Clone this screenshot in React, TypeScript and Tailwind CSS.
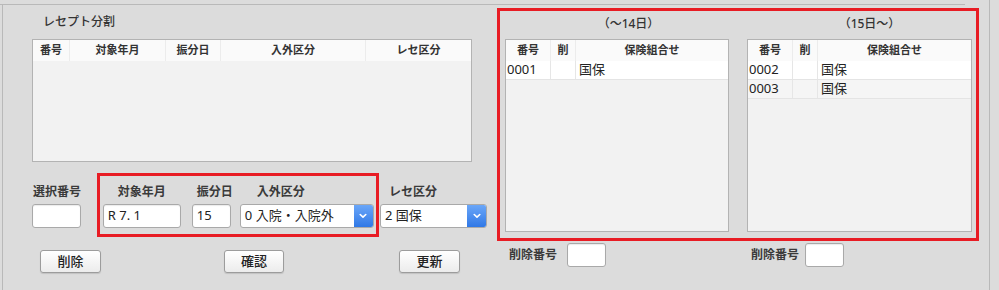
import React from "react";

const font = "font-['Noto_Sans','Noto_Sans_CJK_JP',sans-serif]";

function TextBox({ value = "", className = "" }: { value?: string; className?: string }) {
  return (
    <div
      className={`h-[24px] bg-white border border-[#a9a9a9] rounded-[3px] shadow-[inset_0_1px_1px_rgba(0,0,0,0.08)] flex items-center pl-[4px] text-[13px] text-[#222] ${className}`}
    >
      {value}
    </div>
  );
}

function Chevron() {
  return (
    <svg width="8" height="6" viewBox="0 0 8 6" fill="none">
      <path d="M1.2 1.5 L4 4.2 L6.8 1.5" stroke="white" strokeWidth="1.6" strokeLinecap="round" strokeLinejoin="round" />
    </svg>
  );
}

function SelectBox({ value, className = "" }: { value: string; className?: string }) {
  return (
    <div
      className={`h-[24px] bg-white border border-[#a9a9a9] rounded-[3px] flex items-stretch overflow-hidden text-[13px] text-[#222] ${className}`}
    >
      <div className="flex-1 flex items-center pl-[4px] whitespace-nowrap">{value}</div>
      <div className="w-[19px] flex items-center justify-center bg-gradient-to-b from-[#6aa6f8] to-[#2f78e6]">
        <Chevron />
      </div>
    </div>
  );
}

function Button({ label, className = "" }: { label: string; className?: string }) {
  return (
    <div
      className={`h-[23px] flex items-center justify-center border border-[#9c9c9c] rounded-[3px] bg-gradient-to-b from-white to-[#ececec] shadow-[0_1px_1px_rgba(0,0,0,0.12)] text-[13px] font-medium text-[#222] ${className}`}
    >
      {label}
    </div>
  );
}

function HeadCell({ label, className = "" }: { label: string; className?: string }) {
  return (
    <div className={`flex items-center justify-center border-r border-[#ececec] last:border-r-0 text-[11px] font-bold text-[#333] ${className}`}>
      {label}
    </div>
  );
}

// small combination table on the right side
function ComboTable({ rows, className = "" }: { rows: string[]; className?: string }) {
  return (
    <div className={`h-[193px] border border-[#b3b3b3] bg-[#f2f2f2] flex flex-col ${className}`}>
      <div className="h-[21px] flex bg-[#fafafa]">
        <HeadCell label="番号" className="w-[45px]" />
        <HeadCell label="削" className="w-[25px]" />
        <HeadCell label="保険組合せ" className="flex-1" />
      </div>
      {rows.map((r, i) => (
        <div
          key={r}
          className={`h-[19px] flex border-b border-[#e4e4e4] text-[13px] text-[#222] ${i % 2 === 0 ? "bg-white" : "bg-[#f5f5f5]"}`}
        >
          <div className="w-[45px] flex items-center pl-[1px] border-r border-[#e6e6e6]">{r}</div>
          <div className="w-[25px] border-r border-[#e6e6e6]" />
          <div className="flex-1 flex items-center pl-[3px]">国保</div>
        </div>
      ))}
    </div>
  );
}

export default function App() {
  return (
    <div className={`w-[999px] h-[290px] bg-[#dcdcdc] flex overflow-hidden ${font}`}>
      <div className="w-[989px] flex flex-col">
        <div className="h-[4px]" />
        <div className="w-[965px] h-px bg-[#b9b9b9]" />
        <div className="flex-1 ml-[2px] border-l border-[#b9b9b9] flex">
          {/* left: receipt split */}
          <div className="ml-[29px] w-[455px] flex flex-col">
            <div className="pt-[9px] pl-[11px] h-[16px] box-content text-[12px] leading-[16px] font-medium text-[#333]">
              レセプト分割
            </div>
            <div className="mt-[9px] w-[440px] h-[123px] border border-[#b3b3b3] bg-[#f2f2f2]">
              <div className="h-[21px] flex bg-[#fafafa]">
                <HeadCell label="番号" className="w-[37px]" />
                <HeadCell label="対象年月" className="w-[96px]" />
                <HeadCell label="振分日" className="w-[55px]" />
                <HeadCell label="入外区分" className="w-[145px]" />
                <HeadCell label="レセ区分" className="flex-1" />
              </div>
            </div>

            <div className="mt-[11px] flex items-start">
              <div className="w-[65px] pt-[11px] flex flex-col">
                <div className="h-[16px] leading-[16px] pl-[1px] text-[12px] font-bold text-[#3a3a3a]">選択番号</div>
                <TextBox className="mt-[4px] w-[49px]" />
              </div>
              <div className="w-[283px] h-[64px] border-[3px] border-[#e81c24] flex pl-[3px] pt-[8px]">
                <div className="w-[78px] flex flex-col">
                  <div className="h-[16px] leading-[16px] text-center text-[12px] font-bold text-[#3a3a3a]">対象年月</div>
                  <TextBox value="R 7. 1" className="mt-[4px] w-[78px]" />
                </div>
                <div className="ml-[11px] w-[39px] flex flex-col">
                  <div className="h-[16px] leading-[16px] pl-[5px] whitespace-nowrap text-[12px] font-bold text-[#3a3a3a]">振分日</div>
                  <TextBox value="15" className="mt-[4px] w-[39px]" />
                </div>
                <div className="ml-[9px] w-[134px] flex flex-col">
                  <div className="h-[16px] leading-[16px] pl-[17px] text-[12px] font-bold text-[#3a3a3a]">入外区分</div>
                  <SelectBox value="0 入院・入院外" className="mt-[4px] w-[134px]" />
                </div>
              </div>
              <div className="ml-[1px] w-[107px] pt-[11px] flex flex-col">
                <div className="h-[16px] leading-[16px] pl-[9px] text-[12px] font-bold text-[#3a3a3a]">レセ区分</div>
                <SelectBox value="2 国保" className="mt-[4px] w-[107px]" />
              </div>
            </div>

            <div className="mt-[13px] flex">
              <Button label="削除" className="ml-[8px] w-[61px]" />
              <Button label="確認" className="ml-[123px] w-[60px]" />
              <Button label="更新" className="ml-[115px] w-[61px]" />
            </div>
          </div>

          {/* right: split by day */}
          <div className="ml-[10px] w-[482px] mt-[3px] flex flex-col">
            <div className="h-[233px] border-[3px] border-[#e81c24] flex pl-[5px] pt-[5px]">
              <div className="w-[224px] flex flex-col">
                <div className="h-[16px] leading-[16px] pl-[23px] text-center text-[12px] font-medium text-[#333]">（～14日）</div>
                <ComboTable rows={["0001"]} className="mt-[7px]" />
              </div>
              <div className="ml-[18px] w-[225px] flex flex-col">
                <div className="h-[16px] leading-[16px] pl-[20px] text-center text-[12px] font-medium text-[#333]">（15日～）</div>
                <ComboTable rows={["0002", "0003"]} className="mt-[7px]" />
              </div>
            </div>
            <div className="mt-[2px] flex">
              <div className="ml-[12px] w-[242px] flex items-center">
                <span className="text-[12px] font-bold text-[#3a3a3a]">削除番号</span>
                <TextBox className="ml-[10px] w-[39px]" />
              </div>
              <div className="flex items-center">
                <span className="text-[12px] font-bold text-[#3a3a3a]">削除番号</span>
                <TextBox className="ml-[6px] w-[39px]" />
              </div>
            </div>
          </div>
        </div>
      </div>
      <div className="w-px bg-[#b9b9b9]" />
    </div>
  );
}
